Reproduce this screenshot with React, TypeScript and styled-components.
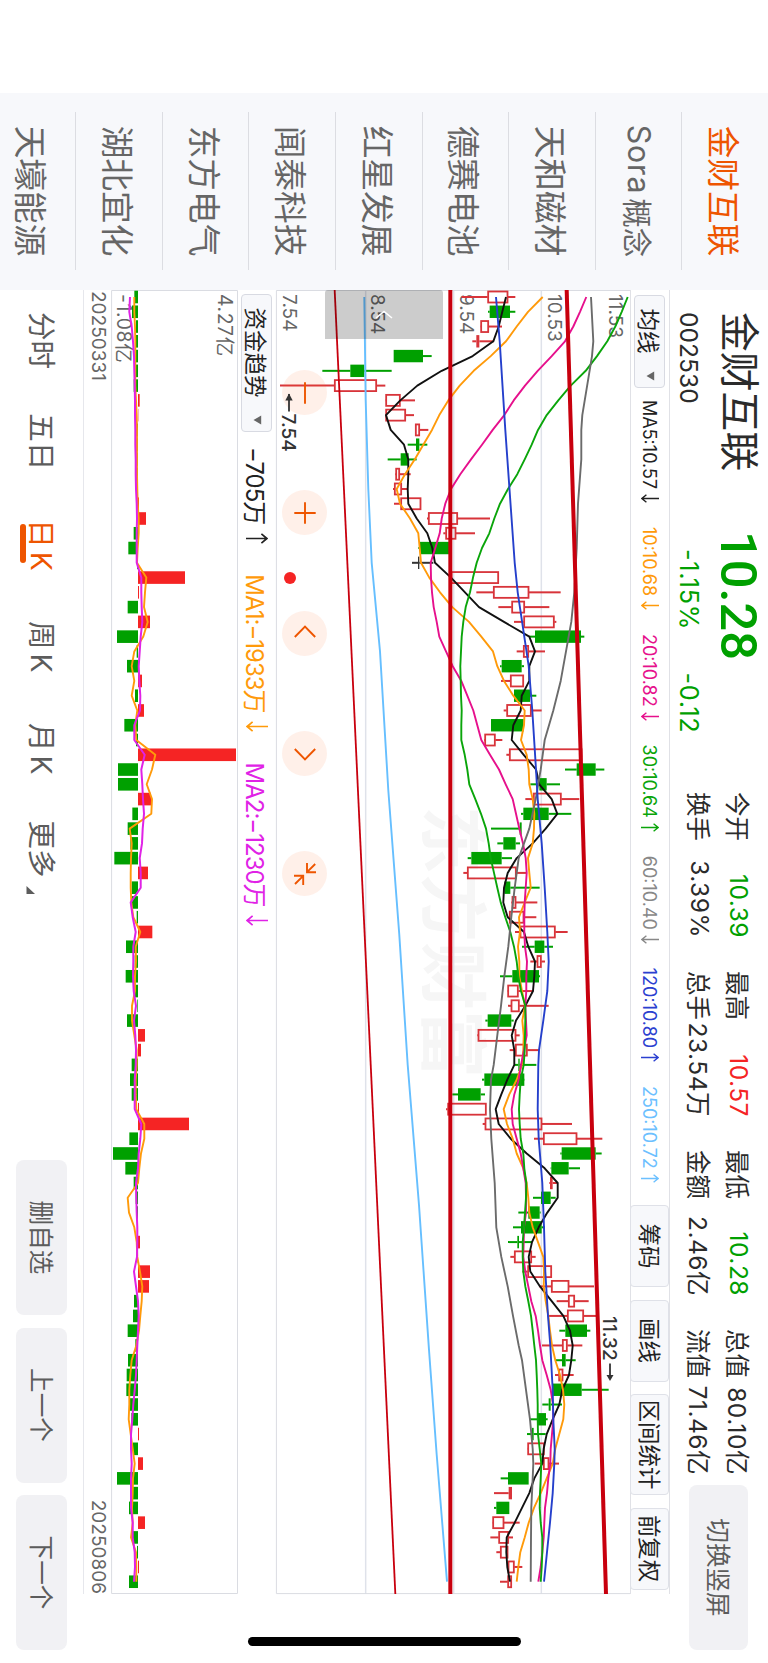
import React from 'react';
import styled, { createGlobalStyle } from 'styled-components';

const GlobalStyle = createGlobalStyle`
  *, *::before, *::after { box-sizing: border-box; }
  html, body { margin: 0; padding: 0; background: #fff; }
`;

const GREEN = '#00a000';
const RED = '#f52424';
const ORANGE = '#ff9a0a';
const MAGENTA = '#e6108c';
const ACCENT = '#ee5500';
const GREY = '#666';
const INK = '#2b2b2b';

/* ---------- data ---------- */

const watchlist = ['金财互联', 'Sora概念', '天和磁材', '德赛电池', '红星发展', '闻泰科技', '东方电气', '湖北宜化', '天壕能源'];

const quotes = [
  [
    { label: '今开', value: '10.39', color: GREEN },
    { label: '最高', value: '10.57', color: RED },
    { label: '最低', value: '10.28', color: GREEN },
    { label: '总值', value: '80.10亿', color: INK },
  ],
  [
    { label: '换手', value: '3.39%', color: INK },
    { label: '总手', value: '23.54万', color: INK },
    { label: '金额', value: '2.46亿', color: INK },
    { label: '流值', value: '71.46亿', color: INK },
  ],
];

const averages = [
  { text: 'MA5:10.57', up: false, color: '#222' },
  { text: '10:10.68', up: false, color: ORANGE },
  { text: '20:10.82', up: false, color: MAGENTA },
  { text: '30:10.64', up: true, color: '#0aa50a' },
  { text: '60:10.40', up: false, color: '#888' },
  { text: '120:10.80', up: true, color: '#2b40d0' },
  { text: '250:10.72', up: true, color: '#6cc0ff' },
];

// [low, body low, body high, high, kind] in third-pixels of the value axis
type Candle = [number, number, number, number, 'r' | 'g' | 'k'];
const candles: Candle[] = [
  [575, 653, 714, 736, 'r'], [654, 659, 720, 736, 'g'], [631, 632, 656, 696, 'r'], [607, 619, 628, 672, 'r'],
  [371, 371, 459, 485, 'g'], [157, 241, 283, 365, 'g'], [30, 193, 320, 346, 'r'], [346, 347, 391, 435, 'r'],
  [346, 347, 407, 432, 'r'], [436, 436, 449, 475, 'r'], [413, 438, 448, 472, 'g'], [353, 392, 416, 440, 'g'],
  [375, 377, 389, 422, 'r'], [369, 373, 395, 412, 'r'], [372, 392, 453, 453, 'r'], [471, 475, 563, 660, 'r'],
  [520, 527, 558, 615, 'r'], [445, 450, 540, 540, 'g'], [426, 444, 448, 490, 'k'], [543, 543, 686, 686, 'r'],
  [619, 670, 777, 872, 'r'], [685, 725, 764, 838, 'r'], [732, 761, 853, 859, 'r'], [778, 795, 933, 943, 'g'],
  [740, 760, 776, 825, 'r'], [690, 695, 755, 762, 'g'], [693, 721, 761, 761, 'r'], [732, 732, 780, 799, 'g'],
  [701, 710, 784, 815, 'r'], [663, 663, 761, 761, 'g'], [642, 644, 676, 697, 'r'], [709, 718, 936, 936, 'r'],
  [885, 920, 977, 1003, 'g'], [781, 808, 830, 870, 'g'], [766, 790, 874, 928, 'r'], [753, 760, 836, 904, 'g'],
  [663, 749, 755, 755, 'g'], [682, 700, 737, 750, 'g'], [593, 604, 695, 726, 'g'], [580, 592, 739, 768, 'r'],
  [702, 703, 721, 809, 'g'], [724, 726, 738, 802, 'r'], [715, 718, 762, 799, 'r'], [735, 750, 856, 893, 'r'],
  [756, 794, 823, 849, 'g'], [781, 801, 814, 825, 'r'], [690, 727, 807, 810, 'g'], [712, 713, 745, 790, 'r'],
  [714, 723, 748, 836, 'r'], [646, 653, 724, 731, 'g'], [622, 624, 738, 749, 'r'], [719, 736, 772, 807, 'r'],
  [733, 745, 749, 799, 'g'], [636, 643, 763, 764, 'g'], [547, 564, 632, 645, 'g'], [528, 533, 649, 649, 'r'],
  [638, 645, 816, 906, 'r'], [792, 820, 921, 997, 'r'], [871, 875, 977, 995, 'g'], [842, 844, 896, 930, 'g'],
  [838, 840, 848, 863, 'r'], [789, 813, 842, 857, 'g'], [745, 775, 809, 812, 'g'], [729, 753, 815, 825, 'g'],
  [714, 742, 747, 786, 'g'], [721, 733, 785, 797, 'r'], [757, 773, 845, 845, 'r'], [807, 844, 897, 972, 'r'],
  [860, 895, 914, 956, 'r'], [833, 892, 941, 982, 'r'], [868, 886, 951, 961, 'g'], [816, 877, 892, 937, 'r'],
  [857, 876, 887, 917, 'g'], [855, 866, 879, 911, 'r'], [847, 847, 935, 1016, 'g'], [817, 836, 842, 876, 'g'],
  [779, 801, 828, 833, 'g'], [771, 786, 791, 827, 'g'], [772, 773, 823, 823, 'r'], [794, 820, 837, 867, 'r'],
  [692, 714, 776, 776, 'g'], [672, 716, 726, 726, 'r'], [672, 679, 718, 718, 'g'], [667, 668, 702, 749, 'r'],
  [661, 686, 716, 729, 'r'], [679, 691, 714, 714, 'r'], [713, 714, 733, 757, 'r'], [690, 713, 725, 725, 'r'],
];

const indexed = (values: number[]): [number, number][] => values.map((v, i) => [i, v]);

const ma5 = indexed([
  708, 697, 686, 670, 608, 515, 442, 391, 348, 362, 402, 415, 415, 413, 415, 440, 472, 487, 495, 543, 585, 627,
  702, 778, 795, 778, 778, 755, 752, 730, 725, 761, 798, 808, 845, 862, 827, 788, 740, 713, 702, 700, 713, 762,
  775, 795, 793, 789, 766, 738, 725, 733, 733, 712, 694, 677, 686, 722, 770, 824, 863, 863, 832, 806, 786, 776,
  781, 810, 845, 880, 900, 908, 904, 897, 877, 868, 848, 830, 821, 817, 793, 778, 756, 734, 710, 709, 712, 720,
]);
const ma10 = indexed([
  818, 774, 740, 708, 662, 611, 569, 535, 508, 486, 460, 434, 405, 380, 390, 420, 445, 449, 453, 478, 510, 547,
  597, 634, 669, 682, 702, 730, 764, 762, 753, 770, 776, 778, 788, 793, 792, 788, 774, 778, 782, 764, 747, 750,
  744, 748, 748, 756, 765, 757, 761, 760, 756, 740, 718, 701, 711, 728, 740, 760, 770, 775, 778, 788, 804, 820,
  822, 821, 827, 835, 840, 846, 856, 870, 879, 883, 880, 868, 856, 848, 830, 812, 792, 776, 764, 751, 745, 740,
]);
const ma20 = indexed([
  949, 930, 910, 885, 845, 803, 765, 731, 703, 668, 636, 603, 571, 543, 526, 515, 509, 496, 482, 483, 486, 491,
  500, 508, 528, 548, 574, 592, 610, 622, 634, 660, 687, 707, 728, 738, 748, 759, 767, 770, 767, 764, 763, 763,
  765, 771, 769, 769, 766, 768, 770, 762, 753, 746, 733, 725, 728, 740, 752, 760, 767, 768, 768, 762, 761, 760,
  766, 775, 784, 797, 804, 810, 817, 830, 842, 849, 850, 846, 842, 841, 835, 831, 825, 823, 821, 817, 812, 805,
]);
const ma30 = indexed([
  1073, 1055, 1036, 1012, 981, 947, 902, 865, 830, 804, 785, 764, 742, 714, 690, 673, 658, 636, 620, 609, 600, 587,
  580, 575, 573, 571, 572, 573, 575, 574, 574, 584, 592, 598, 616, 633, 648, 656, 662, 672, 682, 692, 706, 721,
  732, 740, 745, 753, 766, 766, 765, 764, 761, 752, 749, 747, 749, 752, 760, 763, 769, 768, 765, 762, 758, 758,
  760, 766, 775, 783, 788, 793, 798, 800, 802, 803, 803, 804, 809, 814, 812, 810, 809, 812, 817, 817, 815, 812,
]);
const ma60: [number, number][] = [
  [0, 963], [3, 970], [4, 966], [8, 937], [9, 934], [11, 934], [14, 924], [17, 920], [20, 913], [22, 904], [26, 872],
  [28, 850], [30, 824], [32, 812], [34, 797], [36, 778], [38, 746], [40, 734], [42, 724], [44, 715], [46, 703],
  [48, 693], [50, 682], [52, 671], [53, 663], [55, 660], [57, 664], [60, 674], [63, 679], [65, 694], [67, 713],
  [69, 729], [71, 746], [72, 756], [74, 768], [76, 780], [78, 788], [79, 790], [80, 788], [82, 784], [84, 783], [87, 782],
];
const ma120: [number, number][] = [
  [0, 678], [3, 689], [9, 706], [18, 734], [20, 743], [25, 776], [28, 787], [32, 798], [34, 803], [37, 815], [40, 824],
  [43, 832], [45, 836], [47, 832], [49, 820], [51, 807], [52, 805], [55, 803], [57, 806], [60, 817], [63, 822],
  [66, 826], [69, 834], [71, 841], [74, 848], [76, 850], [78, 854], [79, 853], [81, 848], [83, 840], [85, 831], [87, 822],
];
const ma250: [number, number][] = [
  [0, 283], [7, 287], [13, 295], [18, 305], [24, 330], [33.4, 355], [43.2, 388], [52, 413], [61.5, 447], [71.3, 477],
  [78.4, 500], [87, 531],
];

const FLOW_ZERO = 174;
const flow = [
  163, 156, 168, 165, 164, 163, 161, 179, 175, 169, 170, 171, 168, 170, 177, 198, 161, 145, 171, 315, 177, 143,
  210, 111, 170, 141, 186, 165, 192, 133, 168, 468, 114, 114, 213, 157, 143, 151, 103, 204, 155, 153, 170, 217,
  138, 164, 137, 164, 172, 141, 195, 183, 155, 150, 155, 177, 327, 148, 99, 136, 161, 167, 169, 174, 180, 173,
  210, 207, 162, 159, 143, 166, 144, 140, 139, 147, 154, 177, 159, 189, 111, 157, 147, 195, 159, 171, 177, 147,
];
const flowMa1 = indexed([
  163, 163, 165, 166, 166, 166, 166, 168, 170, 171, 171, 171, 171, 172, 173, 176, 176, 173, 171, 199, 195, 192,
  203, 190, 163, 155, 163, 155, 172, 166, 169, 226, 216, 200, 216, 214, 149, 155, 153, 152, 152, 154, 160, 181,
  167, 168, 165, 165, 156, 156, 163, 170, 170, 167, 167, 169, 193, 193, 183, 178, 174, 143, 147, 163, 170, 172,
  180, 187, 185, 181, 177, 169, 155, 151, 148, 148, 146, 152, 158, 164, 159, 158, 156, 158, 153, 168, 169, 169,
]);
const flowMa2 = indexed([
  150, 148, 155, 159, 162, 163, 164, 165, 165, 166, 166, 167, 167, 168, 170, 171, 170, 170, 170, 184, 184, 185,
  187, 182, 179, 176, 178, 181, 180, 163, 163, 194, 184, 187, 189, 192, 188, 186, 179, 182, 182, 152, 158, 167,
  160, 160, 159, 161, 168, 162, 166, 168, 167, 164, 164, 164, 184, 181, 176, 174, 168, 169, 170, 172, 172, 171,
  162, 168, 174, 176, 174, 172, 170, 168, 164, 160, 157, 153, 153, 155, 153, 153, 153, 158, 158, 164, 165, 162,
]);

/* ---------- shell ---------- */

const Screen = styled.div`
  width: 768px;
  height: 1663px;
  overflow: hidden;
  background: #fff;
`;

const Landscape = styled.div`
  display: grid;
  grid-template-columns: 93px 197px 1373px;
  width: 1663px;
  height: 768px;
  transform-origin: 0 0;
  transform: translateX(768px) rotate(90deg);
  font-family: Inter, 'Noto Sans CJK SC', sans-serif;
  color: ${INK};
  white-space: nowrap;
`;

const Notch = styled.div``;

const Sidebar = styled.nav`
  display: grid;
  grid-template-rows: repeat(9, 86.6px);
  padding: 0 20px 0 19px;
  overflow: hidden;
  background: #f7f8fb;
`;

const StockTab = styled.div<{ $active?: boolean; $size: number }>`
  display: flex;
  align-items: center;
  justify-content: center;
  padding-bottom: 1px;
  border-bottom: 1px solid #dcdde2;
  color: ${(p) => (p.$active ? ACCENT : GREY)};
  font-size: ${(p) => p.$size}px;
  gap: 4px;
  &:last-child { border-bottom: 0; }
`;

const LatinName = styled.span`
  font-size: 30.5px;
  letter-spacing: 0.8px;
`;

const Main = styled.main`
  display: grid;
  grid-template-rows: 98px 40px 354px 38px 127px 28px 83px;
  position: relative;
`;

/* ---------- header ---------- */

const Header = styled.header`
  display: grid;
  grid-template-columns: 219px 261px 693px 165px;
  padding-left: 22px;
`;

const Identity = styled.div`
  display: flex;
  flex-direction: column;
`;

const StockName = styled.div`
  height: 61px;
  line-height: 58px;
  font-size: 39.8px;
`;

const StockCode = styled.div`
  line-height: 36px;
  font-size: 24.6px;
`;

const LastPrice = styled.div`
  height: 61px;
  font: 500 50.6px/60px Roboto, sans-serif;
  color: ${GREEN};
`;

const Change = styled.div`
  display: flex;
  gap: 42.5px;
  padding-left: 18px;
  line-height: 36px;
  font-size: 25.2px;
  letter-spacing: 0.65px;
  color: ${GREEN};
`;

const QuoteGrid = styled.div`
  display: grid;
  grid-template-columns: repeat(4, 146px);
  grid-template-rows: 39px 39px;
  column-gap: 33px;
  padding-top: 9.5px;
`;

const Quote = styled.div`
  display: flex;
  align-items: center;
  justify-content: space-between;
  font-size: 24.5px;
`;

const QuoteValue = styled.span<{ $color: string }>`
  color: ${(p) => p.$color};
  letter-spacing: 0.5px;
`;

const SoftButton = styled.button<{ $w: number; $h: number }>`
  width: ${(p) => p.$w}px;
  height: ${(p) => p.$h}px;
  padding: 0 0 3px;
  border: 0;
  border-radius: 8px;
  background: #f1f1f4;
  color: #5c5c5c;
  font: inherit;
  font-size: 24.6px;
`;

const SwitchSlot = styled.div`
  padding-top: 20px;
`;

/* ---------- indicator rows ---------- */

const AverageRow = styled.div`
  display: flex;
  align-items: center;
  width: 1304px;
  padding-left: 5px;
  border-top: 1px solid #e0e1e6;
  border-bottom: 1px solid #e0e1e6;
`;

const Dropdown = styled.div<{ $w: number }>`
  display: flex;
  align-items: center;
  justify-content: space-between;
  width: ${(p) => p.$w}px;
  height: 31px;
  padding: 0 6px 1px 12.5px;
  border: 1px solid #d8dae2;
  border-radius: 4px;
  background: #f7f8fb;
  color: #222;
  font-size: 22.5px;
`;

const Averages = styled.div`
  display: flex;
  gap: 23.9px;
  width: 817px;
  padding-left: 12px;
`;

const Reading = styled.span<{ $color: string; $size: number; $gap: number; $tight?: boolean }>`
  display: flex;
  align-items: center;
  gap: ${(p) => p.$gap}px;
  color: ${(p) => p.$color};
  font-size: ${(p) => p.$size}px;
  letter-spacing: ${(p) => (p.$tight ? '-1px' : 'normal')};
`;

const ToolButtons = styled.div`
  display: flex;
  gap: 12.5px;
`;

const ToolButton = styled.button<{ $w?: number }>`
  width: ${(p) => p.$w ?? 82}px;
  height: 39px;
  padding: 0 0 2px;
  border: 1px solid #dfe1e8;
  border-radius: 4px;
  background: #f7f8fb;
  color: #222;
  font: inherit;
  font-size: 22.4px;
`;

const FlowRow = styled.div`
  display: flex;
  align-items: center;
  padding-left: 4px;
`;

const FlowReadings = styled.div`
  display: flex;
  gap: 30.5px;
  padding-left: 15.5px;
`;

/* ---------- charts ---------- */

const Chart = styled.svg`
  display: block;
  overflow: visible;
`;

const Dates = styled.div`
  display: flex;
  justify-content: space-between;
  align-items: center;
  width: 1304px;
  padding: 0 0 3px 1px;
  border-bottom: 1px solid #e6e7ec;
  color: ${GREY};
  font-size: 19px;
`;

const ScrollHandle = styled.div`
  position: absolute;
  left: 0;
  top: 325px;
  display: flex;
  align-items: center;
  justify-content: center;
  width: 49px;
  height: 118px;
  border-radius: 3px 0 0 3px;
  background: rgba(0, 0, 0, 0.2);
`;

const Controls = styled.div`
  position: absolute;
  left: 80px;
  top: 440.5px;
  display: flex;
  gap: 75.3px;
`;

const RoundButton = styled.div`
  display: flex;
  align-items: center;
  justify-content: center;
  width: 45px;
  height: 45px;
  border-radius: 50%;
  background: rgba(255, 110, 40, 0.1);
`;

const LiveDot = styled.div`
  position: absolute;
  left: 281.7px;
  top: 471.7px;
  width: 12px;
  height: 12px;
  border-radius: 50%;
  background: ${RED};
`;

const HomeIndicator = styled.div`
  position: absolute;
  right: 17px;
  top: 247px;
  width: 9px;
  height: 273px;
  border-radius: 5px;
  background: #000;
`;

/* ---------- footer ---------- */

const Footer = styled.footer`
  display: flex;
  justify-content: space-between;
  padding: 16px 13px 0 22px;
`;

const Periods = styled.div`
  display: flex;
  gap: 44.3px;
  height: 51px;
`;

const Period = styled.div<{ $active?: boolean }>`
  display: flex;
  flex-direction: column;
  align-items: center;
  line-height: 51px;
  color: ${(p) => (p.$active ? ACCENT : '#5c5c5c')};
  font-size: 28.5px;
`;

const PeriodLabel = styled.div<{ $k?: boolean }>`
  display: flex;
  gap: ${(p) => (p.$k ? 4 : 8)}px;
  padding: ${(p) => (p.$k ? '0 1.5px 0 4.5px' : '0')};
  height: 41px;
  svg { align-self: flex-end; }
`;

const Underline = styled.div`
  width: 39px;
  height: 6px;
  border-radius: 3px;
  background: ${ACCENT};
`;

const FooterButtons = styled.div`
  display: flex;
  gap: 12.5px;
`;

/* ---------- small drawings ---------- */

const Caret = () => (
  <svg width="10" height="9" viewBox="0 0 10 9">
    <path d="M0.5 0.8H9.5L5 8.5Z" fill="#666" />
  </svg>
);

const Arrow = ({ up, h }: { up: boolean; h: number }) => (
  <svg width={h / 2} height={h} viewBox="0 0 10 20" fill="none" stroke="currentColor" strokeWidth="1.5">
    {up ? <path d="M5 20V1M0.8 6L5 1L9.2 6" /> : <path d="M5 0V19M0.8 14L5 19L9.2 14" />}
  </svg>
);

const controlPaths = [
  'M-10.7 0H10.7',
  'M-10.7 0H10.7M0 -10.7V10.7',
  'M4 -10.2L-6.5 0L4 10.2',
  'M-4 -10.2L6.5 0L-4 10.2',
  'M-11 -2H-1.8V-11M-1.8 -2L-10 -10.2M1.8 11V1.8H11M1.8 1.8L10 10',
];

/* ---------- chart drawing ---------- */

const PITCH = 14.767;
const xAt = (i: number) => 7 + i * PITCH;
const priceY = (v: number) => 360 - v / 3;
const flowY = (v: number) => 158 - v / 3;
const trace = (pts: [number, number][], y: (v: number) => number) =>
  pts.map(([i, v]) => `${xAt(i).toFixed(1)},${y(v).toFixed(1)}`).join(' ');

const kindColor = { r: '#d8343a', g: GREEN, k: '#333' };

const CandleMark = ({ i, c }: { i: number; c: Candle }) => {
  const [low, bodyLow, bodyHigh, high, kind] = c;
  const x = xAt(i);
  const color = kindColor[kind];
  const top = priceY(bodyHigh);
  const bottom = priceY(bodyLow);
  const hollow = kind === 'r' && bodyHigh - bodyLow > 10;
  return (
    <g stroke={color} strokeWidth="2">
      {high > bodyHigh && <line x1={x} x2={x} y1={priceY(high)} y2={top} />}
      {low < bodyLow && <line x1={x} x2={x} y1={bottom} y2={priceY(low)} />}
      {hollow ? (
        <rect x={x - 5.5} y={top + 0.5} width="11" height={bottom - top - 1} fill="none" strokeWidth="1.8" />
      ) : (
        <rect x={x - 6.2} y={top} width="12.4" height={bottom - top} fill={color} stroke="none" />
      )}
    </g>
  );
};

const lines = [
  { pts: ma5, color: '#111' },
  { pts: ma10, color: ORANGE },
  { pts: ma20, color: MAGENTA },
  { pts: ma30, color: '#0aa50a' },
  { pts: ma60, color: '#6b6b6b' },
  { pts: ma120, color: '#2540cc' },
  { pts: ma250, color: '#66bfff' },
];

const axisLabels = [
  { text: '11.53', y: 158.8 - 138 },
  { text: '10.53', y: 220.3 - 138 },
  { text: '9.54', y: 308.5 - 138 },
  { text: '8.54', y: 396.8 - 138 },
  { text: '7.54', y: 484.8 - 138 },
];

const PriceChart = () => (
  <Chart width="1304" height="354">
    <text x="516" y="202" fontSize="68" fontWeight="700" fill="#f6f6f6" fontFamily="'Noto Sans CJK SC', sans-serif">
      东方财富
    </text>
    <g stroke="#dfe2ea" strokeWidth="1.5">
      <line x1="0" x2="1304" y1={priceY(287)} y2={priceY(287)} />
      <line x1="0" x2="1304" y1={priceY(551)} y2={priceY(551)} />
      <line x1="0" x2="1304" y1={priceY(814)} y2={priceY(814)} />
    </g>
    <path d="M0.5 0V353.6H1303.6V0" fill="none" stroke="#dadce2" />
    <g fontSize="19" fill="#666">
      {axisLabels.map((l) => (
        <text key={l.text} x="4" y={l.y}>{l.text}</text>
      ))}
    </g>
    {candles.map((c, i) => <CandleMark key={i} i={i} c={c} />)}
    {lines.map((l) => (
      <polyline key={l.color} points={trace(l.pts, priceY)} fill="none" stroke={l.color} strokeWidth="1.9" strokeLinejoin="round" />
    ))}
    <g stroke="#c8000e">
      <line x1="0" y1={priceY(194)} x2="1304" y2={priceY(376)} strokeWidth="1.8" />
      <line x1="0" y1={priceY(541)} x2="1304" y2={priceY(541)} strokeWidth="4" />
      <line x1="0" y1={priceY(890)} x2="1304" y2={priceY(1008)} strokeWidth="4" />
    </g>
  </Chart>
);

const PriceMarks = styled.svg`
  position: absolute;
  left: 0;
  top: 138px;
`;

const FlowChart = () => (
  <Chart width="1304" height="127">
    <path d="M0.5 0.5H1303.5V126.4H0.5Z" fill="none" stroke="#dadce2" />
    <g fontSize="19.4" fill="#666" letterSpacing="0.6">
      <text x="4" y="20">4.27亿</text>
      <text x="4" y="121.5">-1.08亿</text>
    </g>
    {flow.map((v, i) => (
      <rect
        key={i}
        x={xAt(i) - 6.3}
        width="12.6"
        y={flowY(Math.max(v, FLOW_ZERO))}
        height={Math.abs(v - FLOW_ZERO) / 3}
        fill={v > FLOW_ZERO ? RED : GREEN}
      />
    ))}
    <polyline points={trace(flowMa1, flowY)} fill="none" stroke={ORANGE} strokeWidth="1.9" strokeLinejoin="round" />
    <polyline points={trace(flowMa2, flowY)} fill="none" stroke="#e022e6" strokeWidth="2" strokeLinejoin="round" />
  </Chart>
);

/* ---------- app ---------- */

export default function App() {
  return (
    <Screen>
      <GlobalStyle />
      <Landscape>
        <Notch />
        <Sidebar>
          {watchlist.map((name, i) =>
            name.startsWith('Sora') ? (
              <StockTab key={name} $size={29.5}><LatinName>Sora</LatinName><span>概念</span></StockTab>
            ) : (
              <StockTab key={name} $size={32.7} $active={i === 0}>{name}</StockTab>
            ),
          )}
        </Sidebar>
        <Main>
          <Header>
            <Identity>
              <StockName>金财互联</StockName>
              <StockCode>002530</StockCode>
            </Identity>
            <Identity>
              <LastPrice>10.28</LastPrice>
              <Change><span>-1.15%</span><span>-0.12</span></Change>
            </Identity>
            <QuoteGrid>
              {quotes.flat().map((q) => (
                <Quote key={q.label}>
                  <span>{q.label}</span>
                  <QuoteValue $color={q.color}>{q.value}</QuoteValue>
                </Quote>
              ))}
            </QuoteGrid>
            <SwitchSlot><SoftButton $w={165} $h={59}>切换竖屏</SoftButton></SwitchSlot>
          </Header>

          <AverageRow>
            <Dropdown $w={93}>均线<Caret /></Dropdown>
            <Averages>
              {averages.map((a) => (
                <Reading key={a.text} $color={a.color} $size={18} $gap={5}>
                  {a.text}<Arrow up={a.up} h={18} />
                </Reading>
              ))}
            </Averages>
            <ToolButtons>
              <ToolButton>筹码</ToolButton>
              <ToolButton>画线</ToolButton>
              <ToolButton $w={101}>区间统计</ToolButton>
              <ToolButton>前复权</ToolButton>
            </ToolButtons>
          </AverageRow>

          <PriceChart />

          <FlowRow>
            <Dropdown $w={137.5}>资金趋势<Caret /></Dropdown>
            <FlowReadings>
              <Reading $color="#222" $size={24} $gap={8.5} $tight>−705万<Arrow up h={22} /></Reading>
              <Reading $color={ORANGE} $size={24} $gap={8.5} $tight>MA1:−1933万<Arrow up={false} h={22} /></Reading>
              <Reading $color="#e022e6" $size={24} $gap={8.5} $tight>MA2:−1230万<Arrow up={false} h={22} /></Reading>
            </FlowReadings>
          </FlowRow>

          <FlowChart />

          <Dates><span>20250331</span><span>20250806</span></Dates>

          <Footer>
            <Periods>
              <Period><PeriodLabel>分时</PeriodLabel></Period>
              <Period><PeriodLabel>五日</PeriodLabel></Period>
              <Period $active><PeriodLabel $k><span>日</span><span>K</span></PeriodLabel><Underline /></Period>
              <Period><PeriodLabel $k><span>周</span><span>K</span></PeriodLabel></Period>
              <Period><PeriodLabel $k><span>月</span><span>K</span></PeriodLabel></Period>
              <Period>
                <PeriodLabel>
                  更多
                  <svg width="8" height="9" viewBox="0 0 8 9"><path d="M8 0V8.5H0Z" fill="#5c5c5c" /></svg>
                </PeriodLabel>
              </Period>
            </Periods>
            <FooterButtons>
              <SoftButton $w={155} $h={51}>删自选</SoftButton>
              <SoftButton $w={155} $h={51}>上一个</SoftButton>
              <SoftButton $w={155} $h={51}>下一个</SoftButton>
            </FooterButtons>
          </Footer>

          <ScrollHandle>
            <svg width="10" height="18" viewBox="0 0 10 18" fill="none" stroke="#fff" strokeWidth="1.6">
              <path d="M8 1L1.5 9L8 17" />
            </svg>
          </ScrollHandle>
          <Controls>
            {controlPaths.map((d) => (
              <RoundButton key={d}>
                <svg width="24" height="24" viewBox="-12 -12 24 24" fill="none" stroke={ACCENT} strokeWidth="1.9">
                  <path d={d} />
                </svg>
              </RoundButton>
            ))}
          </Controls>
          <LiveDot />
          <PriceMarks width="1304" height="354" fontSize="19" fontWeight="500" fill="#333">
            <path d="M104 341H121.5" stroke="#333" strokeWidth="1.8" />
            <path d="M103.5 341L110.5 337.3V344.7Z" />
            <text x="123.5" y="348.5">7.54</text>
            <text x="1026" y="27">11.32</text>
            <path d="M1073.5 20H1087" stroke="#333" strokeWidth="1.8" />
            <path d="M1091 20L1085 16.5V23.5Z" />
          </PriceMarks>
          <HomeIndicator />
        </Main>
      </Landscape>
    </Screen>
  );
}
